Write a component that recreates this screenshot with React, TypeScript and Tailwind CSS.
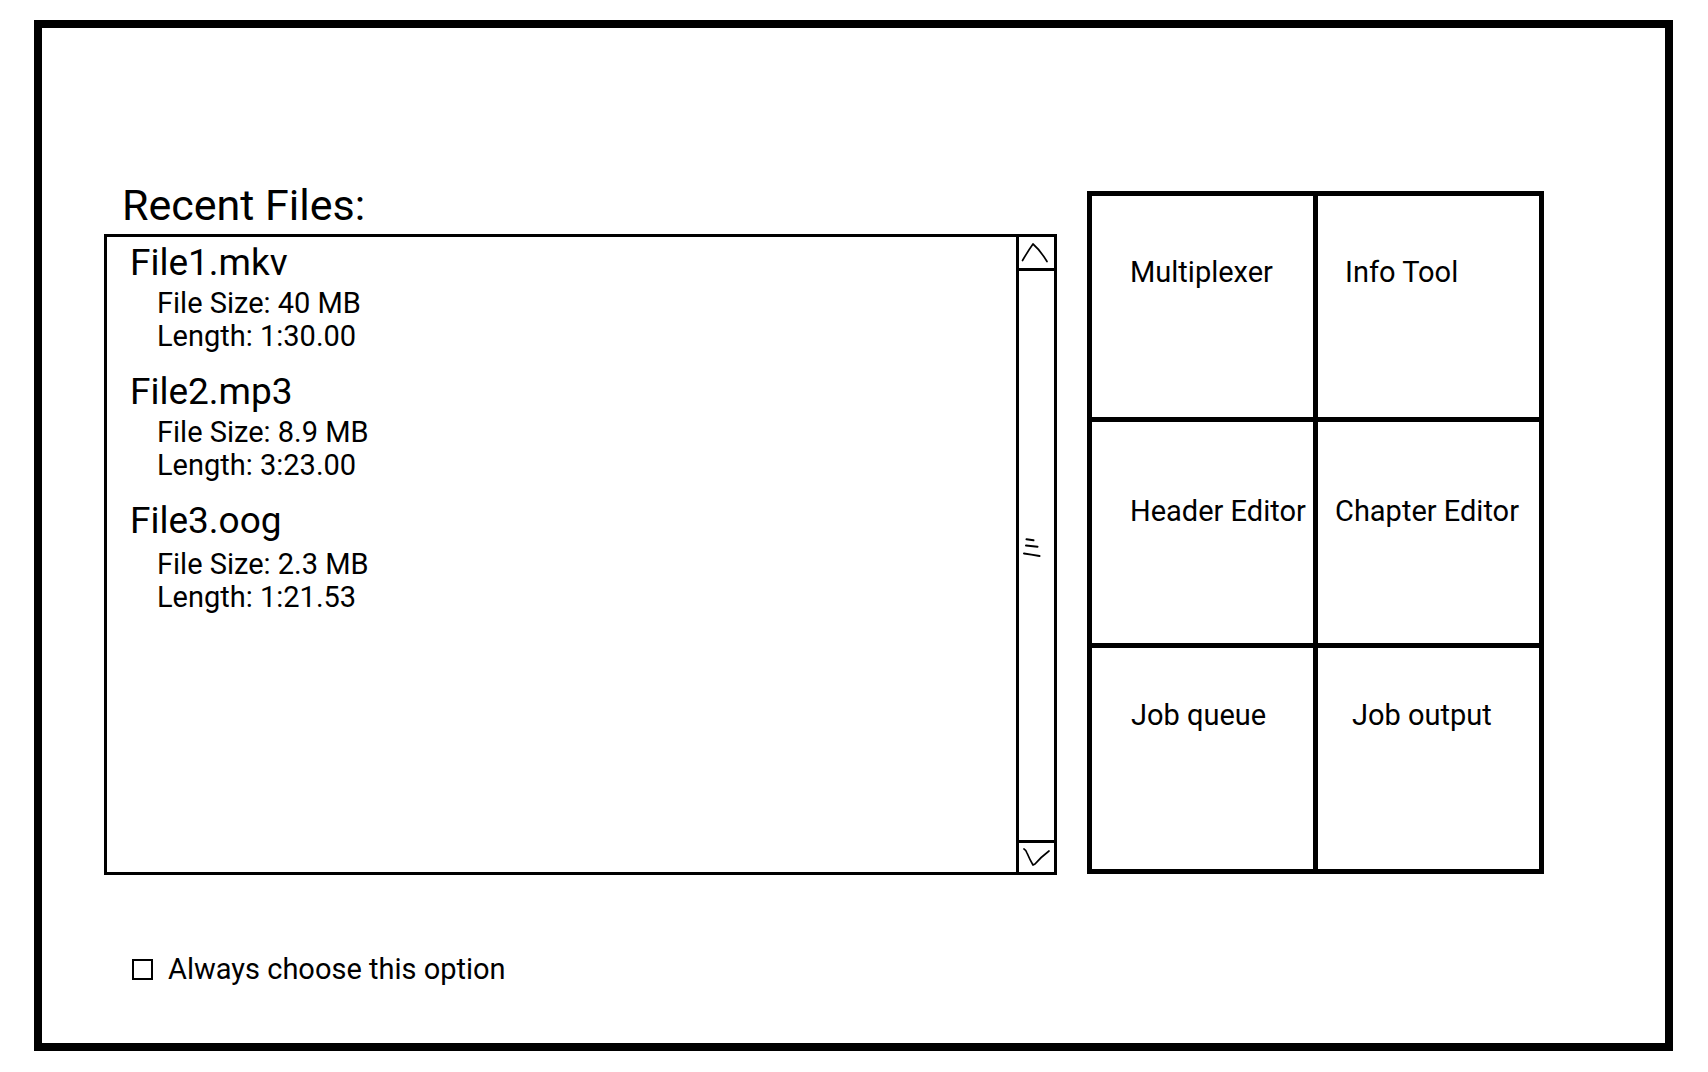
import React from 'react';

interface RecentFile {
  name: string;
  size: string;
  length: string;
  gap: string;
}

const recentFiles: RecentFile[] = [
  { name: 'File1.mkv', size: '40 MB', length: '1:30.00', gap: 'mt-[8px]' },
  { name: 'File2.mp3', size: '8.9 MB', length: '3:23.00', gap: 'mt-[8px]' },
  { name: 'File3.oog', size: '2.3 MB', length: '1:21.53', gap: 'mt-[11px]' },
];

const tools = [
  { label: 'Multiplexer', className: 'pl-[38px] pt-[62px]' },
  { label: 'Info Tool', className: 'pl-[27px] pt-[62px]' },
  { label: 'Header Editor', className: 'pl-[38px] pt-[75px]' },
  { label: 'Chapter Editor', className: 'pl-[17px] pt-[75px]' },
  { label: 'Job queue', className: 'pl-[39px] pt-[53px]' },
  { label: 'Job output', className: 'pl-[34px] pt-[53px]' },
];

function ScrollBar() {
  return (
    <div className="flex w-[38px] flex-col border-l-[3px] border-black">
      <div className="h-[34px] border-b-[3px] border-black">
        <svg width="35" height="31" viewBox="0 0 35 31" fill="none" stroke="black" strokeWidth="1.7" strokeLinecap="round" strokeLinejoin="round">
          <path d="M3.5 23.5 Q9 14 14 7 Q21 13 28 24.5" />
        </svg>
      </div>
      <div className="flex flex-1 items-center justify-center pb-[22px]">
        {/* hand-drawn grip */}
        <svg width="35" height="24" viewBox="0 0 35 24" fill="none" stroke="black" strokeWidth="2" strokeLinecap="round">
          <path d="M7.5 6.3 L14.5 7.3" />
          <path d="M7 12.5 L18.5 13.7" />
          <path d="M5 20.5 Q12 21.5 20.5 23" />
        </svg>
      </div>
      <div className="h-[32px] border-t-[3px] border-black">
        <svg width="35" height="29" viewBox="0 0 35 29" fill="none" stroke="black" strokeWidth="1.7" strokeLinecap="round" strokeLinejoin="round">
          <path d="M5 6 Q7 7 8 10 Q11 17 14 22 L16 21 Q22 14 30 8" />
        </svg>
      </div>
    </div>
  );
}

function FileList() {
  return (
    <div className="flex h-[641px] w-[953px] border-[3px] border-black">
      <div className="flex flex-1 flex-col gap-[22px] pl-[23px] pt-[7px]">
        {recentFiles.map((file) => (
          <div key={file.name}>
            <div className="text-[37px] leading-none">{file.name}</div>
            <div className={`ml-[27px] flex flex-col gap-[4px] text-[29px] leading-none ${file.gap}`}>
              <span>File Size: {file.size}</span>
              <span>Length: {file.length}</span>
            </div>
          </div>
        ))}
      </div>
      <ScrollBar />
    </div>
  );
}

function ToolGrid() {
  return (
    <div className="mb-[1px] grid w-[457px] grid-cols-2 gap-[5px] border-[5px] border-black bg-black">
      {tools.map((tool) => (
        <div
          key={tool.label}
          className={`h-[221px] cursor-pointer bg-white text-[29px] leading-none ${tool.className}`}
        >
          {tool.label}
        </div>
      ))}
    </div>
  );
}

export default function App() {
  return (
    <div className="h-[1072px] w-[1708px] bg-white text-black [font-family:Roboto,'Liberation_Sans',sans-serif]">
      <div className="pl-[34px] pt-[20px]">
        <div className="h-[1031px] w-[1639px] border-[8px] border-black pl-[62px] pt-[156px]">
          <div className="flex items-end gap-[30px]">
            <div>
              <h2 className="mb-[7px] pl-[18px] text-[43px] font-normal leading-none">Recent Files:</h2>
              <FileList />
            </div>
            <ToolGrid />
          </div>

          <label className="ml-[28px] mt-[80px] flex items-center gap-[15px] text-[29px] leading-none">
            <span className="h-[21px] w-[21px] border-2 border-black" />
            <span>Always choose this option</span>
          </label>
        </div>
      </div>
    </div>
  );
}
